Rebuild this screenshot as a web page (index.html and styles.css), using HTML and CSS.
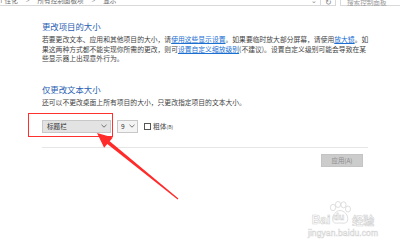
FILE: index.html
```html
<!DOCTYPE html>
<html lang="zh-CN">
<head>
<meta charset="utf-8">
<link rel="stylesheet" href="styles.css">
</head>
<body>
<div class="topbar">
  <div class="address">
    <div class="crumbs">
      <span>个性化</span><span class="sep">&gt;</span><span>所有控制面板项</span><span class="sep">&gt;</span><span>显示</span>
    </div>
    <span class="drop">&#8964;</span>
  </div>
  <div class="refresh">&#8635;</div>
  <div class="search">搜索控制面板</div>
</div>

<div class="main">
  <h1 class="title">更改项目的大小</h1>
  <p class="desc">若要更改文本、应用和其他项目的大小，请<a href="#">使用这些显示设置</a>。如果要临时放大部分屏幕，请使用<a href="#">放大镜</a>。如<br>果这两种方式都不能实现你所需的更改，则可<a href="#">设置自定义缩放级别</a>(不建议)。设置自定义级别可能会导致在某<br>些显示器上出现意外行为。</p>

  <h2 class="title title2">仅更改文本大小</h2>
  <p class="desc desc2">还可以不更改桌面上所有项目的大小，只更改指定项目的文本大小。</p>

  <div class="controls">
    <div class="select item">
      <span>标题栏</span>
      <svg class="chev" width="6" height="4" viewBox="0 0 6 4"><path d="M0.5 0.8 L3 3.2 L5.5 0.8" fill="none" stroke="#555" stroke-width="0.8"/></svg>
    </div>
    <div class="select size">
      <span>9</span>
      <svg class="chev" width="6" height="4" viewBox="0 0 6 4"><path d="M0.5 0.8 L3 3.2 L5.5 0.8" fill="none" stroke="#555" stroke-width="0.8"/></svg>
    </div>
    <label class="check"><span class="box"></span><span>粗体<small>(B)</small></span></label>
  </div>

  <div class="divider"></div>
  <div class="actions">
    <div class="apply">应用(A)</div>
  </div>
</div>

<div class="highlight"></div>
<svg class="arrow" width="400" height="248" viewBox="0 0 400 248">
  <polygon points="97,133 112.9,137.4 109.7,141.2 178.4,198.6 177.6,199.4 107.3,144 104.1,147.8" fill="#ff2b2b"/>
</svg>

<div class="watermark">
  <div class="logo">
    <span class="bai">Bai</span>
    <span class="paw">
      <svg width="26" height="24" viewBox="0 0 26 24">
        <g fill="#fff" stroke="#d6d6d6" stroke-width="0.8">
          <ellipse cx="6" cy="6.5" rx="2.6" ry="3.2"/>
          <ellipse cx="11" cy="3.5" rx="2.6" ry="3"/>
          <ellipse cx="16.5" cy="3.8" rx="2.6" ry="3"/>
          <ellipse cx="21" cy="8" rx="2.5" ry="3"/>
          <path d="M6 20 C4 14 10 9.5 13 9.5 C17 9.5 22 14 20.5 20 C19.5 23 15 22 13 22 C10 22 6.5 23 6 20 Z"/>
        </g>
      </svg>
      <span class="du">du</span>
    </span>
    <span class="jy">经验</span>
  </div>
  <div class="url">jingyan.baidu.com</div>
</div>
</body>
</html>
```

FILE: styles.css
```css
* { box-sizing: border-box; }
html, body { margin: 0; padding: 0; background: #fff; }
body {
  width: 400px;
  height: 248px;
  overflow: hidden;
  position: relative;
  font-family: "Noto Sans CJK SC", "Noto Sans", sans-serif;
  color: #444;
}

.topbar {
  display: flex;
  height: 6px;
  overflow: hidden;
}
.address {
  flex: 1;
  margin-left: -4px;
  height: 6px;
  border: 1px solid #d9d9d9;
  border-top: none;
  display: flex;
  justify-content: space-between;
  align-items: flex-end;
  padding-right: 3px;
}
.crumbs {
  display: flex;
  gap: 8px;
  font-size: 6.6px;
  line-height: 8px;
  margin-bottom: 0;
  transform: translateY(-1px);
  color: #666;
  margin-left: 1px;
}
.crumbs .sep { color: #999; }
.drop { font-size: 7px; line-height: 6px; color: #888; transform: translateY(-2px); }
.refresh {
  width: 15px;
  height: 6px;
  border-bottom: 1px solid #d9d9d9;
  border-right: 1px solid #d9d9d9;
  font-size: 8px;
  line-height: 4px;
  text-align: center;
  color: #888;
}
.search {
  margin-left: 4px;
  width: 60px;
  height: 6px;
  border: 1px solid #d9d9d9;
  border-top: none;
  border-right: none;
  font-size: 6.6px;
  line-height: 4px;
  padding-left: 6px;
  color: #999;
}

.main {
  padding-left: 42px;
}
.title {
  margin: 14px 0 0 0;
  font-size: 8.4px;
  line-height: 12px;
  font-weight: normal;
  color: #2c5fb3;
}
.title2 { margin-top: 19px; }
.desc {
  margin: 3px 0 0 0;
  font-size: 6.8px;
  line-height: 9.6px;
  color: #444;
  white-space: nowrap;
}
.desc a { color: #1a6fd1; text-decoration: underline; }
.desc2 { margin-top: 3.2px; }

.controls {
  margin-top: 12px;
  display: flex;
  align-items: center;
  height: 13px;
}
.select {
  height: 13px;
  display: flex;
  align-items: center;
  justify-content: space-between;
  font-size: 6.6px;
  color: #333;
  border: 1px solid #c8c8c8;
}
.select.item {
  width: 69px;
  background: #e3e3e3;
  padding: 0 3px 0 4px;
}
.select.size {
  margin-left: 6px;
  width: 21px;
  background: #f4f4f4;
  padding: 0 2px 0 3px;
}
.chev { display: block; }
.check {
  margin-left: 6px;
  display: flex;
  align-items: center;
  gap: 2px;
  font-size: 6.8px;
  color: #444;
}
.check small { font-size: 5px; }
.box {
  width: 7px;
  height: 7px;
  border: 1px solid #555;
  background: #fff;
}

.divider {
  margin-top: 14px;
  width: 326px;
  height: 1.5px;
  background: #e6e6e6;
}
.actions {
  width: 326px;
  display: flex;
  justify-content: flex-end;
  padding-right: 5px;
  margin-top: 6px;
}
.apply {
  width: 42px;
  height: 13px;
  background: #cccccc;
  border: 1px solid #c4c4c4;
  color: #8c8c8c;
  font-size: 6.4px;
  line-height: 11px;
  text-align: center;
}

.highlight {
  position: absolute;
  left: 28px;
  top: 113px;
  width: 85px;
  height: 24px;
  border: 1.5px solid #ff3030;
}
.arrow {
  position: absolute;
  left: 0;
  top: 0;
  pointer-events: none;
}

.watermark {
  position: absolute;
  left: 306px;
  top: 201px;
  width: 74px;
  display: flex;
  flex-direction: column;
  align-items: center;
  color: #fff;
  font-family: "Liberation Sans", Arial, sans-serif;
}
.logo {
  display: flex;
  align-items: flex-end;
  height: 25px;
}
.bai, .du, .jy {
  font-size: 12px;
  font-weight: bold;
  line-height: 12px;
  color: #fff;
  -webkit-text-stroke: 0.6px #d2d2d2;
}
.jy { font-family: "Noto Sans CJK SC", sans-serif; font-size: 11px; margin-left: 1px; }
.paw {
  position: relative;
  width: 24px;
  height: 25px;
  margin-left: -3px;
}
.paw svg { position: absolute; left: 0; top: 0; }
.du {
  position: absolute;
  left: 6px;
  top: 11px;
  font-size: 9px;
  line-height: 10px;
}
.url {
  margin-top: 3px;
  font-size: 8.5px;
  line-height: 9px;
  color: #fff;
  -webkit-text-stroke: 0.5px #d4d4d4;
  letter-spacing: 0.1px;
}
```
